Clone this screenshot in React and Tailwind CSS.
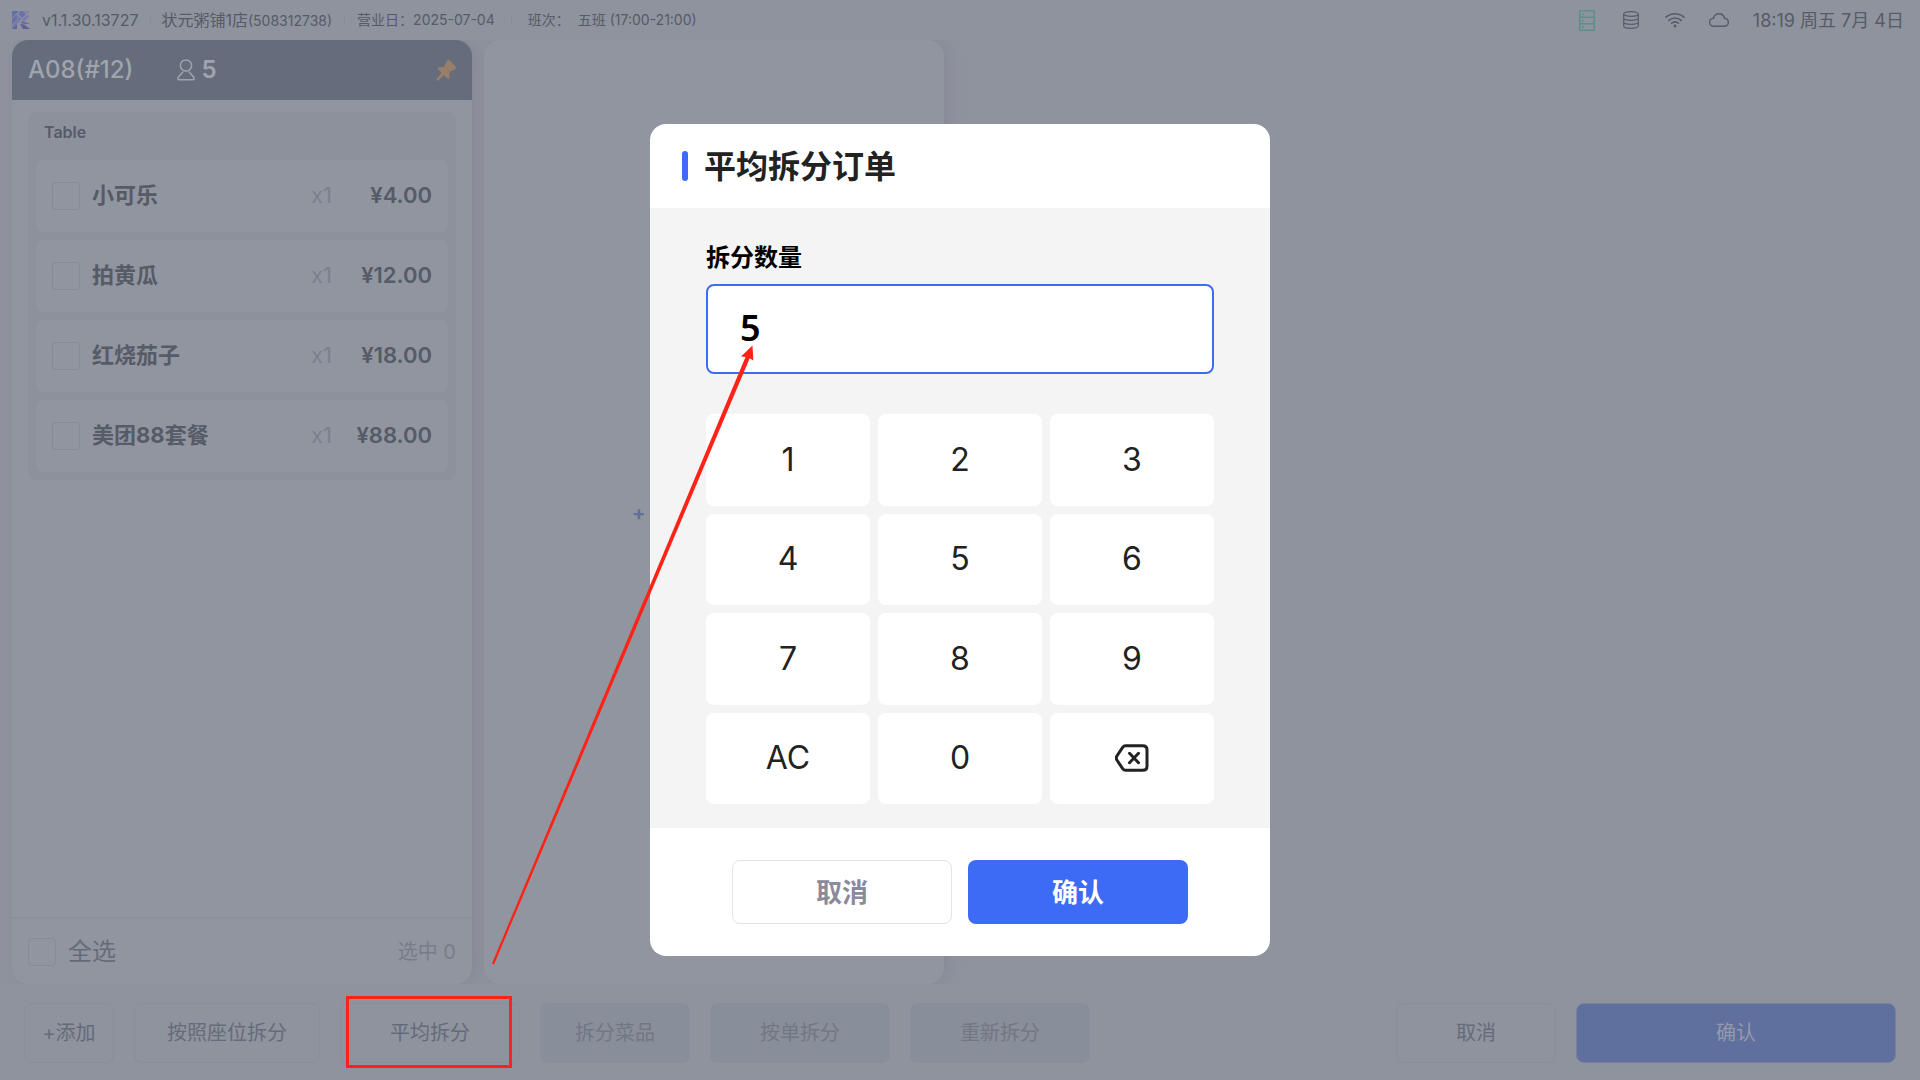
import React, { useState } from "react";

const items = [
  { name: "小可乐", qty: "x1", price: "¥4.00" },
  { name: "拍黄瓜", qty: "x1", price: "¥12.00" },
  { name: "红烧茄子", qty: "x1", price: "¥18.00" },
  { name: "美团88套餐", qty: "x1", price: "¥88.00" },
];

const checkboxClass =
  "size-7 shrink-0 appearance-none rounded border border-[#868b96] bg-transparent";

function Logo() {
  return (
    <svg className="size-[18px]" viewBox="0 0 18 18" aria-hidden="true">
      <path d="M0 0h7L0 7z" fill="#6470a8" />
      <path d="M0 8l5-5v6l-5 5z" fill="#6672a8" />
      <path d="M6 3l2.500-3H11l3 3-4 4z" fill="#6b70aa" />
      <path d="M12 0h6l-3 3z" fill="#7f83ab" />
      <path d="M5.500 4l4 4L0 18v-3l5.500-5.500z" fill="#7478ad" />
      <path d="M0 18l5-5v5z" fill="#5e639f" />
      <path d="M10 8.500l4-4h4l-6 6z" fill="#787cae" />
      <path d="M8 12l3-2 7 3h-5z" fill="#6b6ba4" />
      <path d="M8 13l4 .5 6 4.500h-7z" fill="#5f5e9b" />
    </svg>
  );
}

function ServerIcon() {
  return (
    <svg className="h-[21px] w-4" viewBox="0 0 16 21" fill="none" stroke="#5b9088" strokeWidth="1.500" aria-hidden="true">
      <path d="M.8.8h14.400v19.400H.8zM.8 7.200h14.400M.8 13.700h14.400" />
      <path d="M3 4.200h2M3 10.500h2M3 17h2" />
    </svg>
  );
}

function DatabaseIcon() {
  return (
    <svg className="h-[18px] w-4" viewBox="0 0 16 18" fill="none" stroke="#555b67" strokeWidth="1.200" aria-hidden="true">
      <ellipse cx="8" cy="3" rx="7.300" ry="2.300" />
      <path d="M.7 3v12c0 1.300 3.300 2.300 7.300 2.300s7.300-1 7.300-2.300V3M.7 7c0 1.300 3.300 2.300 7.300 2.300S15.300 8.300 15.300 7M.7 11c0 1.300 3.300 2.300 7.300 2.300s7.300-1 7.300-2.300" />
    </svg>
  );
}

function WifiIcon() {
  return (
    <svg className="h-4 w-5" viewBox="0 0 20 16" fill="none" stroke="#555b67" strokeWidth="1.600" strokeLinecap="round" aria-hidden="true">
      <path d="M1 5.200c5.200-4.700 12.800-4.700 18 0M3.800 8.400c3.600-3.300 8.800-3.300 12.400 0M6.700 11.200c2-1.700 4.600-1.700 6.600 0" />
      <circle cx="10" cy="14" r="1.400" fill="#555b67" stroke="none" />
    </svg>
  );
}

function CloudIcon() {
  return (
    <svg className="h-[14px] w-5" viewBox="0 0 20 14" fill="none" stroke="#555b67" strokeWidth="1.400" aria-hidden="true">
      <path d="M4.800 13.200a4 4 0 0 1-.4-8C5.300 2.500 7.400.8 10 .8s4.700 1.700 5.500 4.400a4 4 0 0 1-.3 8z" />
    </svg>
  );
}

function PersonIcon() {
  return (
    <svg className="h-[22px] w-[18px]" viewBox="0 0 18 22" fill="none" stroke="#a0a4ae" strokeWidth="1.500" strokeLinejoin="round" aria-hidden="true">
      <circle cx="9" cy="6.500" r="5.600" />
      <path d="M6 12.700L1 18.500c-.6 1.200 0 2.300 1.200 2.300h13.600c1.200 0 1.800-1.100 1.200-2.300l-5-5.800" />
    </svg>
  );
}

function PinIcon() {
  return (
    <svg className="h-[21px] w-5" viewBox="0 0 20 21" fill="#997f68" aria-hidden="true">
      <path d="M10.500 1.500c.8-1.600 2.300-2 3.400-.9l5.300 5.600c1.200 1.200.8 2.900-1 3.500l-4 1.700c-.5.3-.8.700-.7 1.300l.1 4c0 1.800-1.300 2.400-2.500 1.400l-3.300-3-5.200 5.200c-1 1-2.500.2-2-1.200l5-6-3.300-3.300c-1.100-1.200-.4-2.500 1.200-2.600l3.700-.1c.6 0 1-.3 1.200-.8z" />
    </svg>
  );
}

function BackspaceIcon() {
  return (
    <svg className="h-7 w-[34px]" viewBox="0 0 34 28" fill="none" stroke="#222" strokeWidth="3" strokeLinejoin="round" strokeLinecap="round" aria-hidden="true">
      <path d="M10.500 1.700h17.200c2.600 0 4.300 1.600 4.300 4v16.600c0 2.400-1.700 4-4.300 4H10.500c-1.100 0-2-.5-2.700-1.400L1.900 16c-.8-1.300-.8-2.700 0-4l5.900-8.900c.7-.9 1.600-1.400 2.700-1.400z" />
      <path d="M14.500 9.300l9 9.400M23.500 9.300l-9 9.400" />
    </svg>
  );
}

function TopBar() {
  return (
    <header className="flex h-10 shrink-0 items-center justify-between pl-3 pr-4 text-[#555b67]">
      <div className="flex items-center whitespace-nowrap">
        <Logo />
        <span className="ml-3 text-base">v1.1.30.13727</span>
        <span className="mx-3 h-3 w-px bg-[#888d98]" />
        <span className="-ml-0.5 text-base">
          状元粥铺1店<span className="text-sm">(508312738)</span>
        </span>
        <span className="mx-3 h-3 w-px bg-[#888d98]" />
        <span className="text-sm">营业日：2025-07-04</span>
        <span className="mx-4 h-3 w-px bg-[#888d98]" />
        <span className="text-sm">班次：</span>
        <span className="ml-2 text-sm">五班 (17:00-21:00)</span>
      </div>
      <div className="flex items-center whitespace-nowrap">
        <ServerIcon />
        <span className="w-7" />
        <DatabaseIcon />
        <span className="w-[26px]" />
        <WifiIcon />
        <span className="w-6" />
        <CloudIcon />
        <time className="ml-6 pt-0.5 text-lg">18:19 周五 7月 4日</time>
      </div>
    </header>
  );
}

function OrderPanel() {
  return (
    <section className="flex w-[460px] shrink-0 flex-col overflow-hidden rounded-2xl bg-[#91959f] shadow-[4px_0_16px_#858994]">
      <div className="flex h-[60px] shrink-0 items-center bg-[#656c7b] px-4 text-[#a0a4ae]">
        <h1 className="text-2xl font-medium">A08(#12)</h1>
        <div className="ml-11 flex items-center gap-1.5">
          <PersonIcon />
          <span className="text-2xl font-semibold">5</span>
        </div>
        <button className="ml-auto" aria-label="固定">
          <PinIcon />
        </button>
      </div>
      <div className="flex-1 px-4 pt-3">
        <div className="rounded-lg bg-[#8d919b] px-2 pb-2">
          <h2 className="flex h-12 items-center px-2 pb-2 text-base font-semibold text-[#555b67]">Table</h2>
          <ul className="flex flex-col gap-2">
            {items.map((item) => (
              <li key={item.name}>
                <label className="flex h-[72px] items-center rounded-lg bg-[#91959f] px-4 text-[22px] text-[#555b67]">
                  <input type="checkbox" className={checkboxClass} />
                  <span className="ml-3 pb-0.5 font-bold">{item.name}</span>
                  <span className="ml-auto pb-0.5 text-[#7b8090]">{item.qty}</span>
                  <span className="w-[100px] pb-0.5 text-right font-semibold">{item.price}</span>
                </label>
              </li>
            ))}
          </ul>
        </div>
      </div>
      <div className="flex h-[67px] shrink-0 items-center justify-between border-t-2 border-[#8c909b] px-4">
        <label className="flex items-center gap-3 text-2xl text-[#656b79]">
          <input type="checkbox" className={checkboxClass} />
          全选
        </label>
        <span className="text-xl text-[#777c8a]">选中 0</span>
      </div>
    </section>
  );
}

const outlineButton = "h-[60px] rounded-lg border border-[#898e99] text-xl text-[#656b79]";
const mutedButton = "h-[60px] rounded-lg bg-[#888e9a] text-xl text-[#727784]";

function ActionBar() {
  return (
    <footer className="flex shrink-0 items-center gap-5 px-6 pb-[17px] pt-[19px]">
      <button className={`${outlineButton} w-[90px]`}>+添加</button>
      <button className={`${outlineButton} w-[186px]`}>按照座位拆分</button>
      <button className={`${outlineButton} relative w-[180px]`}>
        平均拆分
        <span className="absolute -bottom-[6px] -top-[8px] left-[5px] right-[7px] border-[3px] border-[#ff2216]" />
      </button>
      <button disabled className={`${mutedButton} w-[150px]`}>拆分菜品</button>
      <button disabled className={`${mutedButton} w-[180px]`}>按单拆分</button>
      <button disabled className={`${mutedButton} w-[180px]`}>重新拆分</button>
      <button className={`${outlineButton} ml-auto w-[160px]`}>取消</button>
      <button className="h-[60px] w-[320px] rounded-lg border border-[#7681a0] bg-[#5f6f9e] text-xl text-[#959aaa]">
        确认
      </button>
    </footer>
  );
}

const keys = ["1", "2", "3", "4", "5", "6", "7", "8", "9", "AC", "0", "back"];

function SplitDialog() {
  const [count, setCount] = useState("5");
  const press = (key) => {
    if (key === "AC") setCount("");
    else if (key === "back") setCount(count.slice(0, -1));
    else setCount(count + key);
  };
  return (
    <div role="dialog" aria-modal="true" aria-labelledby="split-title" className="w-[620px] overflow-hidden rounded-2xl bg-white">
      <div className="flex h-[84px] items-center gap-4 px-8">
        <span className="h-[30px] w-1.5 rounded-full bg-[#3d6bf6]" />
        <h2 id="split-title" className="pt-0.5 text-[32px] font-bold text-[#222]">平均拆分订单</h2>
      </div>
      <div className="bg-[#f4f4f4] px-14 pb-6 pt-8">
        <label htmlFor="split-count" className="block h-11 pt-0.5 text-2xl font-bold text-black">拆分数量</label>
        <input
          id="split-count"
          value={count}
          onChange={(e) => setCount(e.target.value)}
          className="block h-[90px] w-full rounded-lg border-2 border-[#3d6bf6] bg-white px-8 pb-1 font-['Noto_Sans'] text-4xl font-semibold text-black outline-none"
        />
        <div className="mt-10 grid h-[390px] grid-cols-3 grid-rows-4 gap-2">
          {keys.map((key) => (
            <button
              key={key}
              onClick={() => press(key)}
              aria-label={key === "back" ? "退格" : undefined}
              className="flex items-center justify-center rounded-lg bg-white text-[32px] text-[#222]"
            >
              {key === "back" ? <BackspaceIcon /> : key}
            </button>
          ))}
        </div>
      </div>
      <div className="flex h-32 items-center justify-center gap-4">
        <button className="h-16 w-[220px] rounded-lg border border-[#e3e3e6] bg-white text-[26px] font-bold text-[#8b8a9b]">取消</button>
        <button className="h-16 w-[220px] rounded-lg bg-[#3d6bf6] text-[26px] font-bold text-white">确认</button>
      </div>
    </div>
  );
}

function PointerArrow() {
  return (
    <svg className="pointer-events-none absolute left-[490px] top-[344px] h-[624px] w-[266px]" viewBox="490 344 266 624" fill="#ff2216" aria-hidden="true">
      <path d="M492 963.500L745.500 357l-4.500-.6L752.500 345.500l.8 15-3.600-2.200L494 964.400z" />
    </svg>
  );
}

export default function App() {
  return (
    <div className="relative flex min-h-screen flex-col bg-[#8f939e] font-['Inter','Noto_Sans_CJK_SC',sans-serif]">
      <TopBar />
      <main className="flex flex-1 gap-3 overflow-hidden px-3">
        <OrderPanel />
        <section className="flex w-[460px] shrink-0 items-center rounded-2xl bg-[#91959f] shadow-[4px_0_16px_#858994]">
          <button className="w-full pl-[148px] pt-0.5 text-left text-xl font-bold text-[#5f6f9e]">+</button>
        </section>
      </main>
      <ActionBar />
      <div className="absolute inset-0 flex items-center justify-center">
        <SplitDialog />
      </div>
      <PointerArrow />
    </div>
  );
}
